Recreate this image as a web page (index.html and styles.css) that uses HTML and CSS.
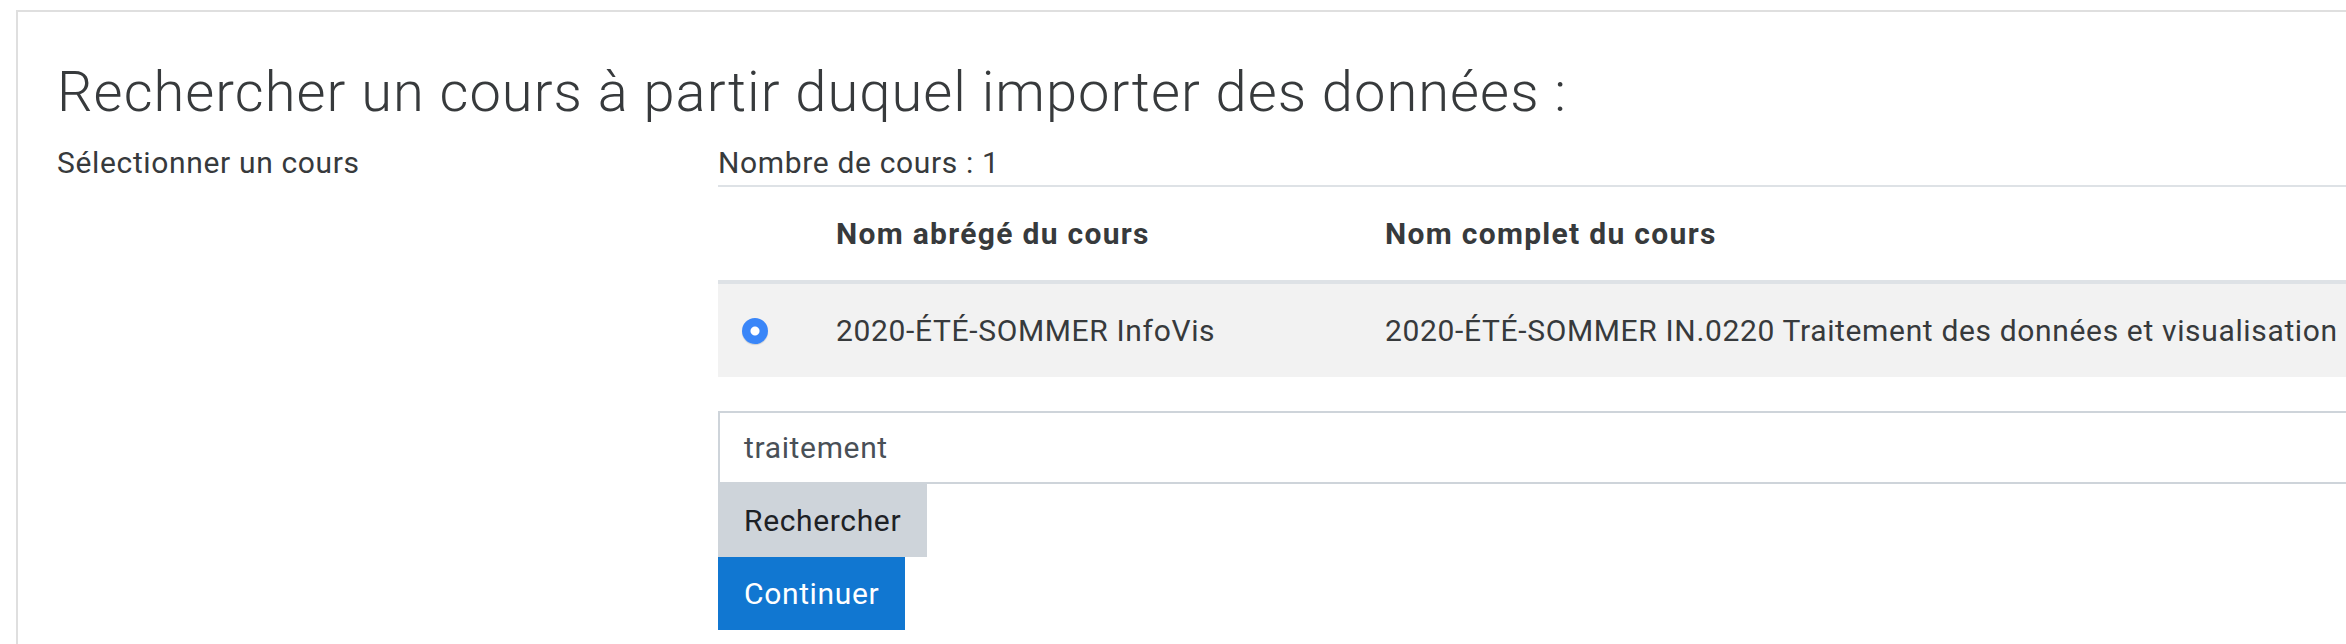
FILE: index.html
```html
<!DOCTYPE html>
<html lang="fr">
<head>
<meta charset="utf-8">
<title>Importer des données</title>
<link rel="stylesheet" href="styles.css">
</head>
<body>
<div class="card">
  <h2 class="title">Rechercher un cours à partir duquel importer des données :</h2>
  <div class="form-row">
    <div class="label">Sélectionner un cours</div>
    <div class="content">
      <div class="count">Nombre de cours : 1</div>
      <table class="courses">
        <colgroup><col class="c-radio"><col class="c-short"><col></colgroup>
        <thead>
          <tr><th></th><th>Nom abrégé du cours</th><th>Nom complet du cours</th></tr>
        </thead>
        <tbody>
          <tr class="selected">
            <td><span class="radio"></span></td>
            <td>2020-ÉTÉ-SOMMER InfoVis</td>
            <td>2020-ÉTÉ-SOMMER IN.0220 Traitement des données et visualisation</td>
          </tr>
        </tbody>
      </table>
      <div class="search-input">traitement</div>
      <div class="btn btn-secondary">Rechercher</div>
      <div class="btn btn-primary">Continuer</div>
    </div>
  </div>
</div>
</body>
</html>
```
FILE: styles.css
```css
html, body {
  margin: 0;
  padding: 0;
  background: #ffffff;
  overflow: hidden;
}
body {
  font-family: Roboto, "Liberation Sans", Arial, sans-serif;
  font-size: 30px;
  line-height: 45px;
  letter-spacing: 0.65px;
  color: #373a3c;
  width: 2346px;
  height: 644px;
}
.card {
  margin: 10px 0 0 16px;
  width: 2700px;
  border: 2px solid #dfdfdf;
  padding: 47px 40px 40px 39px;
  box-sizing: border-box;
  min-height: 700px;
}
.title {
  margin: 0 0 14px 0;
  font-size: 56px;
  line-height: 67px;
  font-weight: 300;
  letter-spacing: 1.05px;
  color: #373a3c;
}
.form-row {
  display: grid;
  grid-template-columns: 661px 1950px;
}
.label {
  color: #373a3c;
}
.count {
  color: #373a3c;
}
.courses {
  width: 100%;
  border-collapse: collapse;
  table-layout: fixed;
  margin-bottom: 34px;
}
.c-radio { width: 94px; }
.c-short { width: 549px; }
.courses th,
.courses td {
  padding: 24px;
  text-align: left;
  vertical-align: middle;
  border-top: 2px solid #dee2e6;
  white-space: nowrap;
}
.courses th {
  font-weight: 700;
  letter-spacing: 1.3px;
  border-bottom: 4px solid #dee2e6;
  color: #373a3c;
}
.courses tbody tr.selected td {
  background: #f2f2f2;
}
.radio {
  display: block;
  width: 26px;
  height: 26px;
  border-radius: 50%;
  background: radial-gradient(circle, #ffffff 0 4px, #3a86f8 5px);
  box-shadow: 0 1px 1px rgba(0,0,0,0.15);
}
.search-input {
  border: 2px solid #ced4da;
  padding: 12px 24px;
  color: #495057;
  background: #fff;
}
.btn {
  display: block;
  width: max-content;
  padding: 12px 24px;
  border: 2px solid transparent;
}
.btn-secondary {
  background: #ced4da;
  border-color: #ced4da;
  color: #1d2125;
}
.btn-primary {
  background: #1177d1;
  border-color: #1177d1;
  color: #ffffff;
}
```
